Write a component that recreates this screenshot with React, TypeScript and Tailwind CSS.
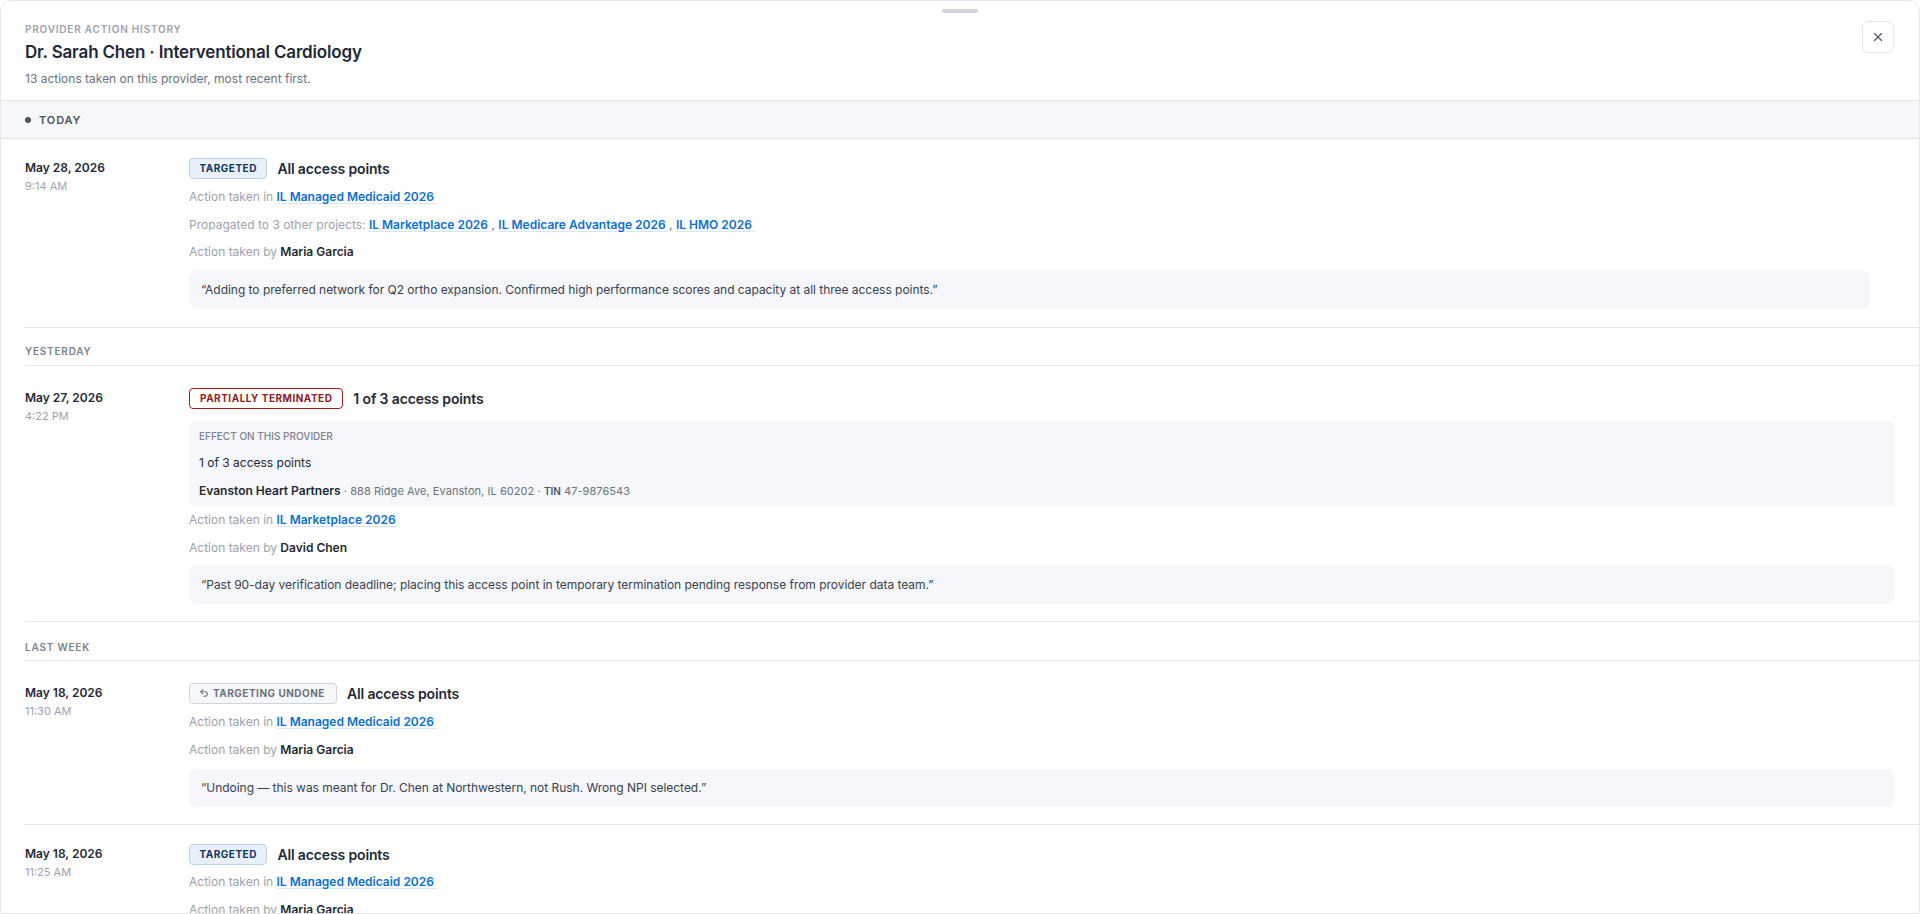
import { X, Undo2 } from 'lucide-react';

const Meta = ({ label, children, className }: { label: string; children: React.ReactNode; className?: string }) => (
    <div className={`text-[12px] leading-[19.5px] text-[#9ca3af] ${className ?? ''}`}>
        {label} {children}
    </div>
);

const ProjectLink = ({ children }: { children: React.ReactNode }) => (
    <a className="font-semibold text-[#0b6fd3] underline decoration-[#d8e7f7] decoration-1 underline-offset-2 [text-decoration-skip-ink:none]">{children}&nbsp;</a>
);

const Comma = () => <span className="ml-[0.5px] text-[#6b7280]">, </span>;

const Person = ({ children }: { children: React.ReactNode }) => (
    <span className="font-semibold text-[#1f2937]">{children}</span>
);

const Note = ({ children, className }: { children: React.ReactNode; className?: string }) => (
    <div className={`rounded-lg bg-[#f6f7fa] px-3 text-[12px] leading-[19.5px] tracking-[-0.03px] text-[#374151] ${className ?? 'py-[9.5px]'}`}>
        {children}
    </div>
);

const Targeted = () => (
    <span className="inline-flex h-[21px] items-center rounded border border-[#b9d3ee] bg-[#e8f1fb] px-[9.5px] text-[10px] font-bold tracking-[0.05em] text-[#12365f]">
        TARGETED
    </span>
);

const Entry = ({ date, time, badge, title, children, className }: { date: string; time: string; badge: React.ReactNode; title: string; children: React.ReactNode; className?: string }) => (
    <div className={`ml-6 flex pr-6 ${className ?? ''}`}>
        <div className="w-[164px] shrink-0">
            <div className="text-[12px] font-semibold leading-[19px] text-[#1f2937]">{date}</div>
            <div className="text-[11px] leading-[18px] text-[#9ca3af]">{time}</div>
        </div>
        <div className="flex min-w-0 flex-1 flex-col gap-2">
            <div className="flex items-center gap-[10px]">
                {badge}
                <span className="text-[14px] font-semibold leading-[21px] tracking-[-0.01em] text-[#1f2937]">{title}</span>
            </div>
            {children}
        </div>
    </div>
);

const SectionLabel = ({ children, className }: { children: React.ReactNode; className?: string }) => (
    <div className={`ml-6 flex items-end border-b border-[#e5e7eb] text-[10px] font-semibold leading-[12px] tracking-[0.08em] text-[#7b8290] ${className ?? 'h-[38px] pb-2'}`}>
        {children}
    </div>
);

export default function App() {
    return (
        <div className="relative h-[914px] overflow-hidden rounded-t-xl border border-[#e5e7eb] bg-white font-['Inter',sans-serif]">
            <div className="absolute left-1/2 top-2 h-1 w-9 -translate-x-1/2 rounded-full bg-[#d1d5db]" />
            <button className="absolute right-[25px] top-[20px] flex h-8 w-8 items-center justify-center rounded-md border border-[#e5e7eb] bg-white text-[#4b5563]">
                <X size={14} />
            </button>

            <header className="h-[100px] border-b border-[#e5e7eb] px-6 pt-5">
                <div className="text-[10px] font-semibold leading-[16px] tracking-[0.08em] text-[#9ca3af]">PROVIDER ACTION HISTORY</div>
                <div className="mt-[2px] text-[17px] font-semibold leading-[26px] tracking-[-0.01em] text-[#1f2937]">Dr. Sarah Chen · Interventional Cardiology</div>
                <div className="mt-[5px] text-[12px] leading-[18px] text-[#6b7280]">13 actions taken on this provider, most recent first.</div>
            </header>

            <div className="flex h-[38px] items-center gap-2 border-b border-[#e5e7eb] bg-[#f6f7fa] px-6">
                <span className="h-[6px] w-[6px] rounded-full bg-[#4b5563]" />
                <span className="pt-px text-[11px] font-semibold tracking-[0.08em] text-[#4b5563]">TODAY</span>
            </div>

            <Entry date="May 28, 2026" time="9:14 AM" badge={<Targeted />} title="All access points" className="border-b border-[#e5e7eb] pb-[18px] pt-[19px]">
                <Meta label="Action taken in"><ProjectLink>IL Managed Medicaid 2026</ProjectLink></Meta>
                <Meta label="Propagated to 3 other projects:">
                    <ProjectLink>IL Marketplace 2026</ProjectLink>
                    <Comma />
                    <ProjectLink>IL Medicare Advantage 2026</ProjectLink>
                    <Comma />
                    <ProjectLink>IL HMO 2026</ProjectLink>
                </Meta>
                <Meta label="Action taken by"><Person>Maria Garcia</Person></Meta>
                <Note className="mr-[25px] py-[10px]">“Adding to preferred network for Q2 ortho expansion. Confirmed high performance scores and capacity at all three access points.”</Note>
            </Entry>

            <SectionLabel>YESTERDAY</SectionLabel>

            <Entry
                date="May 27, 2026"
                time="4:22 PM"
                badge={
                    <span className="inline-flex h-[21px] items-center rounded border border-[#a61e1e] bg-white px-[10px] text-[10px] font-bold tracking-[0.05em] text-[#8f1d1d]">
                        PARTIALLY TERMINATED
                    </span>
                }
                title="1 of 3 access points"
                className="border-b border-[#e5e7eb] pb-[17px] pt-[22px]"
            >
                <div className="-mb-1 mt-1 rounded bg-[#f6f7fa] px-[10px] pb-[6px] pt-[7px]">
                    <div className="text-[10px] font-medium leading-[16px] text-[#7b8290]">EFFECT ON THIS PROVIDER</div>
                    <div className="mt-[10px] text-[12px] leading-[18px] text-[#1f2937]">1 of 3 access points</div>
                    <div className="mt-[10px] text-[11px] leading-[18px] tracking-[0.06px] text-[#6b7280]">
                        <span className="text-[12px] font-semibold tracking-normal text-[#1f2937]">Evanston Heart Partners</span> · 888 Ridge Ave, Evanston, IL 60202 · <span className="text-[10px] font-semibold tracking-normal text-[#4b5563]">TIN</span> 47-9876543
                    </div>
                </div>
                <Meta label="Action taken in"><ProjectLink>IL Marketplace 2026</ProjectLink></Meta>
                <Meta label="Action taken by"><Person>David Chen</Person></Meta>
                <Note>“Past 90-day verification deadline; placing this access point in temporary termination pending response from provider data team.”</Note>
            </Entry>

            <SectionLabel className="h-[39px] pb-[7px]">LAST WEEK</SectionLabel>

            <Entry
                date="May 18, 2026"
                time="11:30 AM"
                badge={
                    <span className="inline-flex h-[21px] items-center gap-1 rounded border border-[#d1d5db] bg-[#f6f7fa] pl-[9px] pr-[11px] text-[10px] font-bold tracking-[0.05em] text-[#6b7280]">
                        <Undo2 size={10} strokeWidth={2.5} />
                        TARGETING UNDONE
                    </span>
                }
                title="All access points"
                className="border-b border-[#e5e7eb] pb-[17px] pt-[22px]"
            >
                <Meta label="Action taken in"><ProjectLink>IL Managed Medicaid 2026</ProjectLink></Meta>
                <Meta label="Action taken by" className="mt-px"><Person>Maria Garcia</Person></Meta>
                <Note className="mt-px py-[9.5px]">“Undoing — this was meant for Dr. Chen at Northwestern, not Rush. Wrong NPI selected.”</Note>
            </Entry>

            <Entry date="May 18, 2026" time="11:25 AM" badge={<Targeted />} title="All access points" className="pt-[19px]">
                <Meta label="Action taken in" className="-mt-px"><ProjectLink>IL Managed Medicaid 2026</ProjectLink></Meta>
                <Meta label="Action taken by"><Person>Maria Garcia</Person></Meta>
            </Entry>
        </div>
    );
}
